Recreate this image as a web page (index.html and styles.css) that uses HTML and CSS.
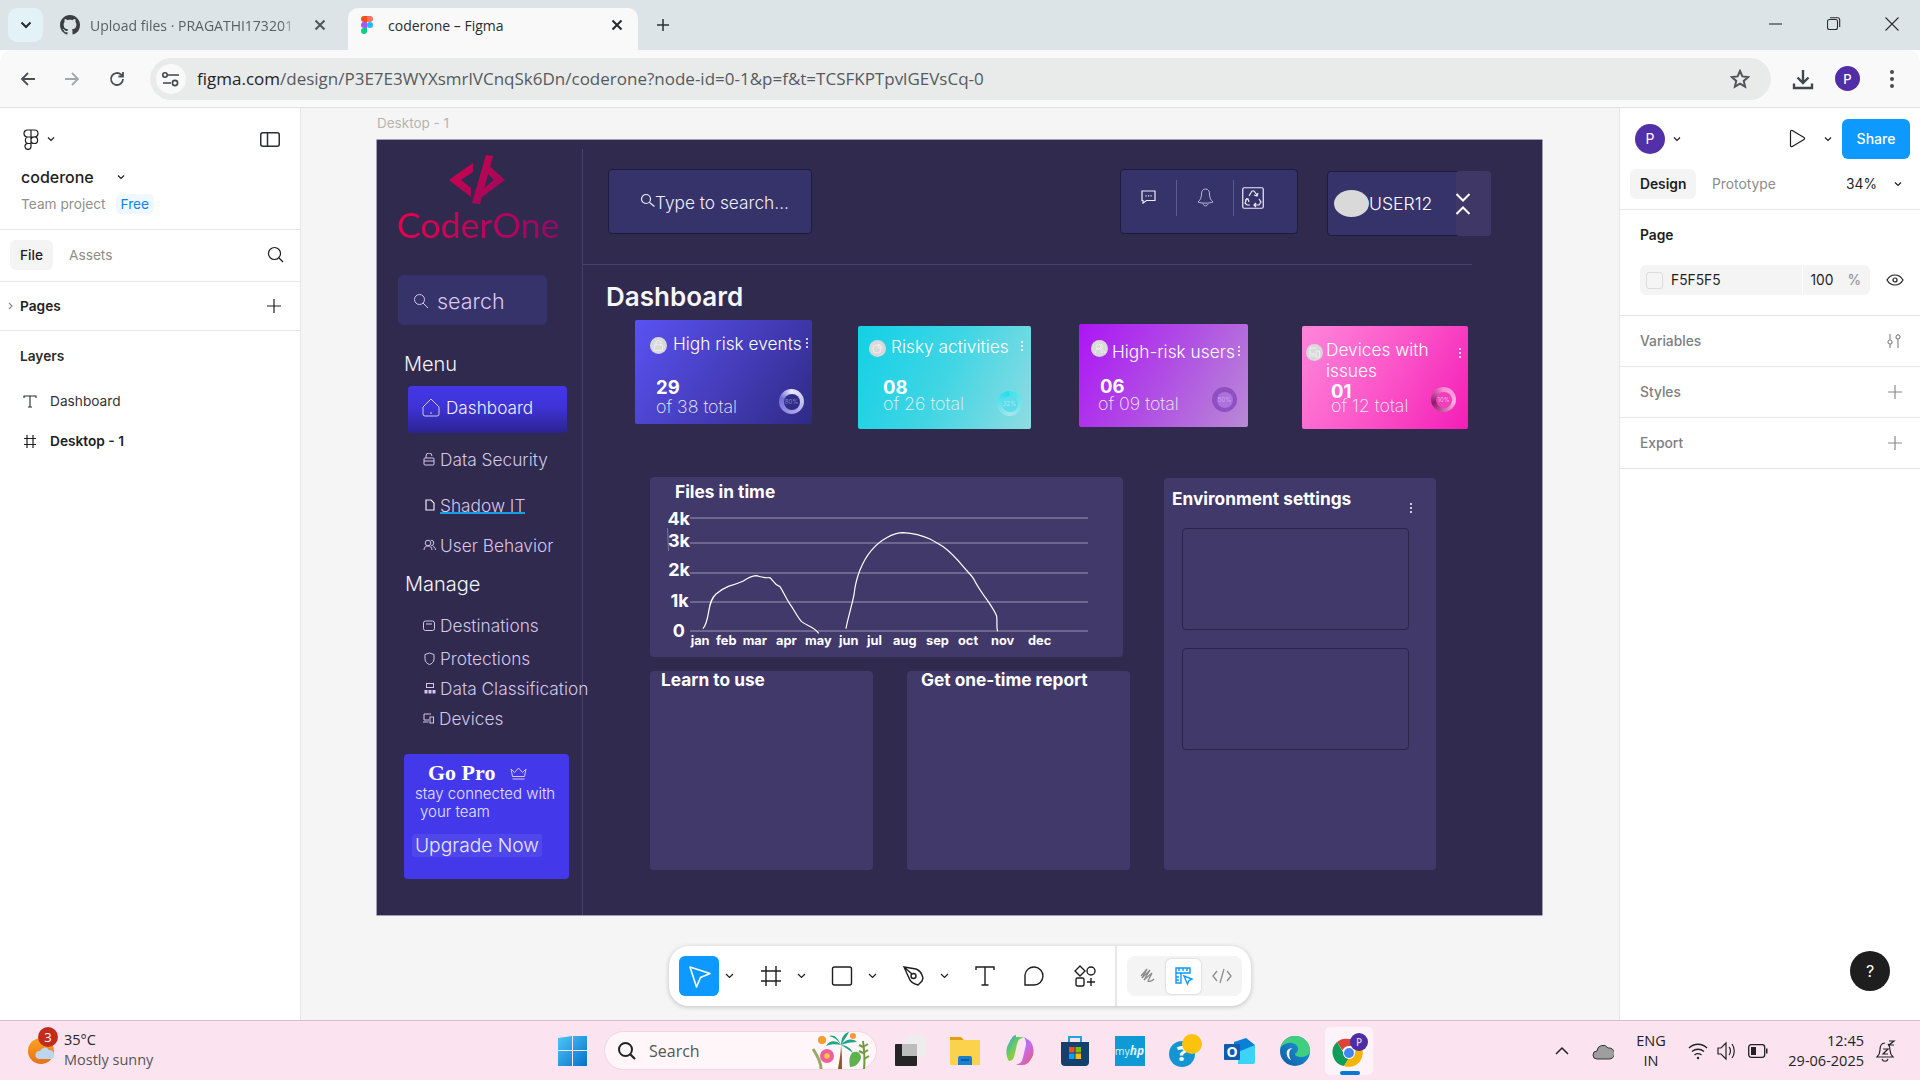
FILE: index.html
```html
<!DOCTYPE html>
<html lang="en">
<head>
<meta charset="utf-8">
<title>coderone – Figma</title>
<link rel="stylesheet" href="styles.css">
</head>
<body>
<header class="tabstrip">
  <button class="tab-search"><svg width="14" height="14" viewBox="0 0 14 14"><path d="M2.5 4.5 7 9l4.5-4.5" class="ic-dark2"/></svg></button>
  <div class="tab tab-idle">
    <svg class="tab-ico" width="20" height="20" viewBox="0 0 16 16"><path fill="#3a3f42" d="M8 0C3.58 0 0 3.58 0 8c0 3.54 2.29 6.53 5.47 7.59.4.07.55-.17.55-.38 0-.19-.01-.82-.01-1.49-2.01.37-2.53-.49-2.69-.94-.09-.23-.48-.94-.82-1.13-.28-.15-.68-.52-.01-.53.63-.01 1.08.58 1.23.82.72 1.21 1.87.87 2.33.66.07-.52.28-.87.51-1.07-1.78-.2-3.64-.89-3.64-3.95 0-.87.31-1.59.82-2.15-.08-.2-.36-1.02.08-2.12 0 0 .67-.21 2.2.82.64-.18 1.32-.27 2-.27s1.36.09 2 .27c1.53-1.04 2.2-.82 2.2-.82.44 1.1.16 1.92.08 2.12.51.56.82 1.27.82 2.15 0 3.07-1.87 3.75-3.65 3.95.29.25.54.73.54 1.48 0 1.07-.01 1.93-.01 2.2 0 .21.15.46.55.38A8.01 8.01 0 0 0 16 8c0-4.42-3.58-8-8-8z"/></svg>
    <span class="tab-title tab-fade">Upload files · PRAGATHI173201</span>
    <svg class="tab-x" width="12" height="12" viewBox="0 0 12 12"><path d="M1.5 1.5l9 9m0-9l-9 9" class="ic-grey2"/></svg>
  </div>
  <div class="tab tab-active">
    <svg class="tab-fig" width="12" height="18" viewBox="0 0 12 18"><path fill="#f24e1e" d="M0 3a3 3 0 0 1 3-3h3v6H3a3 3 0 0 1-3-3z"/><path fill="#ff7262" d="M6 0h3a3 3 0 0 1 0 6H6z"/><path fill="#a259ff" d="M0 9a3 3 0 0 1 3-3h3v6H3a3 3 0 0 1-3-3z"/><circle fill="#1abcfe" cx="9" cy="9" r="3"/><path fill="#0acf83" d="M0 15a3 3 0 0 1 3-3h3v3a3 3 0 0 1-6 0z"/></svg>
    <span class="tab-title tab-title-on">coderone – Figma</span>
    <svg class="tab-x-on" width="12" height="12" viewBox="0 0 12 12"><path d="M1.5 1.5l9 9m0-9l-9 9" class="ic-dark2"/></svg>
  </div>
  <svg class="new-tab" width="14" height="14" viewBox="0 0 14 14"><path d="M7 1v12M1 7h12" class="ic-dark15"/></svg>
  <div class="win-ctrls">
    <svg width="14" height="14" viewBox="0 0 14 14"><path d="M0 7h13" class="ic-dark1"/></svg>
    <svg width="14" height="14" viewBox="0 0 14 14"><rect x=".5" y="2.5" width="10" height="10" rx="2" class="ic-dark1"/><path d="M3 .7h7.5a2 2 0 0 1 2.2 2.2V10" class="ic-dark1"/></svg>
    <svg width="14" height="14" viewBox="0 0 14 14"><path d="M.5.5l13 13m0-13l-13 13" class="ic-dark1"/></svg>
  </div>
</header>

<nav class="browserbar">
  <svg class="nav-back" width="18" height="18" viewBox="0 0 18 18"><path d="M16 9H3M9 3 3 9l6 6" class="ic-grey18"/></svg>
  <svg class="nav-fwd" width="18" height="18" viewBox="0 0 18 18"><path d="M2 9h13M9 3l6 6-6 6" class="ic-light18"/></svg>
  <svg class="nav-reload" width="18" height="18" viewBox="0 0 18 18"><path d="M15 9a6 6 0 1 1-1.8-4.3L15 6.5M15 2v4.5h-4.5" class="ic-grey18"/></svg>
  <div class="omnibox">
    <span class="site-info"><svg width="18" height="18" viewBox="0 0 18 18"><path d="M6 5h11M1 13h8" class="ic-grey15"/><circle cx="3" cy="5" r="2.200" class="ic-grey15"/><circle cx="13" cy="13" r="2.600" class="ic-grey15"/></svg></span>
    <span class="url"><span class="url-host">figma.com</span>/design/P3E7E3WYXsmrlVCnqSk6Dn/coderone?node-id=0-1&amp;p=f&amp;t=TCSFKPTpvlGEVsCq-0</span>
    <svg class="star" width="20" height="20" viewBox="0 0 20 20"><path d="M10 2l2.4 5.4 5.8.6-4.4 3.9 1.3 5.8L10 14.7l-5.1 3 1.3-5.8L1.8 8l5.8-.6z" class="ic-grey2"/></svg>
  </div>
  <svg class="dl" width="22" height="22" viewBox="0 0 22 22"><path d="M11 2v13M5.5 9.5 11 15l5.500-5.500M2 15.500V20h18v-4.500" class="ic-dl"/></svg>
  <span class="chrome-avatar">P</span>
  <svg class="kebab" width="6" height="20" viewBox="0 0 6 20"><circle cx="3" cy="3" r="2" fill="#474c50"/><circle cx="3" cy="10" r="2" fill="#474c50"/><circle cx="3" cy="17" r="2" fill="#474c50"/></svg>
</nav>

<main class="app">
  <aside class="left-panel">
    <section class="lp-head">
      <div class="lp-toprow">
        <svg width="16" height="21" viewBox="0 0 16 21"><path d="M8 1H4.500a3.500 3.500 0 0 0 0 7H8zM8 1h3.500a3.500 3.500 0 0 1 0 7H8zM8 8H4.500a3.500 3.500 0 0 0 0 6.500H8zM8 11.200a3.300 3.300 0 1 0 6.600 0 3.300 3.300 0 1 0-6.600 0zM8 14.500H4.500A3 3 0 1 0 8 17.500z" class="ic-dark12"/></svg>
        <svg class="chev-s" width="8" height="6" viewBox="0 0 8 6"><path d="M1 1.500l3 3 3-3" class="ic-dark12"/></svg>
        <svg class="lp-toggle" width="20" height="15" viewBox="0 0 20 15"><rect x=".75" y=".75" width="18.500" height="13.500" rx="2" class="ic-dark15"/><path d="M7.500 1v13" class="ic-dark15"/></svg>
      </div>
      <div class="lp-name"><span>coderone</span><svg class="chev-name" width="8" height="6" viewBox="0 0 8 6"><path d="M1 1.500l3 3 3-3" class="ic-dark12"/></svg></div>
      <div class="lp-team"><span>Team project</span><span class="free">Free</span></div>
    </section>
    <section class="lp-tabs">
      <span class="pill pill-file">File</span><span class="tab-muted">Assets</span>
      <svg class="lp-search" width="17" height="17" viewBox="0 0 17 17"><circle cx="7.500" cy="7.500" r="6" class="ic-dark12"/><path d="M12 12l4 4" class="ic-dark12"/></svg>
    </section>
    <section class="lp-pages">
      <svg width="5" height="8" viewBox="0 0 5 8"><path d="M1 1l3 3-3 3" class="ic-mute"/></svg>
      <span class="pages-label">Pages</span>
      <svg class="lp-plus" width="14" height="14" viewBox="0 0 14 14"><path d="M7 0v14M0 7h14" class="ic-dark12"/></svg>
    </section>
    <section class="lp-layers">
      <div class="layers-title">Layers</div>
      <div class="layer layer-text"><svg width="14" height="13" viewBox="0 0 14 13"><path d="M1 3V1h12v2M7 1v11M5 12h4" class="ic-dark1"/></svg><span>Dashboard</span></div>
      <div class="layer layer-frame"><svg width="14" height="13" viewBox="0 0 14 13"><path d="M4 0v13M10 0v13M1 3.500h12M1 9.500h12" class="ic-dark12"/></svg><span>Desktop - 1</span></div>
    </section>
  </aside>

  <section class="canvas">
    <div class="frame-label">Desktop - 1</div>
    <div class="frame">
      <div class="side">
        <svg class="logo-mark" width="56" height="50" viewBox="0 0 56 50"><defs><linearGradient id="lg" x1="0" x2="1" y1="0" y2="1"><stop offset="0" stop-color="#d6004f"/><stop offset="1" stop-color="#980a5c"/></linearGradient></defs><path fill="url(#lg)" d="M37 0l7 1-13 48-8-1zM24 8v9l-12 8 10 8v9L0 25zM38 9l18 16-23 17 2-9 10-8-8-8z"/></svg>
        <div class="logo-text">CoderOne</div>
        <div class="side-search"><svg width="16" height="16" viewBox="0 0 16 16"><circle cx="6.500" cy="6.500" r="5" class="ic-lilac"/><path d="M10 10l5 5" class="ic-lilac"/></svg><span>search</span></div>
        <div class="side-h side-menu">Menu</div>
        <div class="nav-on"><svg width="18" height="19" viewBox="0 0 18 19"><path d="M1 9l8-8 8 8v7a2 2 0 0 1-2 2H3a2 2 0 0 1-2-2z" class="ic-lilac"/><path d="M9 14v2" class="ic-lilac"/></svg><span>Dashboard</span></div>
        <div class="nav nav-sec"><svg width="12" height="13" viewBox="0 0 12 13"><rect x="1" y="5" width="10" height="7" rx="1" class="ic-lilac"/><path d="M3 5V3a3 3 0 0 1 6 0M1 8h10" class="ic-lilac"/></svg><span>Data Security</span></div>
        <div class="nav nav-shadow"><svg width="10" height="12" viewBox="0 0 10 12"><path d="M1 1h5l3 3v7H1z" class="ic-white"/></svg><span class="shadow-it">Shadow IT</span></div>
        <div class="nav nav-user"><svg width="13" height="12" viewBox="0 0 13 12"><circle cx="5" cy="4" r="2.800" class="ic-lilac"/><path d="M1 11c0-3 2-4 4-4s4 1 4 4M8 1.200a2.800 2.800 0 0 1 0 5.600M10 7.500c1.500.5 2.500 1.500 2.500 3.500" class="ic-lilac"/></svg><span>User Behavior</span></div>
        <div class="side-h side-manage">Manage</div>
        <div class="nav nav-dest"><svg width="12" height="12" viewBox="0 0 12 12"><rect x=".5" y="2" width="11" height="9.500" rx="2" class="ic-lilac"/><path d="M3 5h6" class="ic-lilac"/></svg><span>Destinations</span></div>
        <div class="nav nav-prot"><svg width="11" height="13" viewBox="0 0 11 13"><path d="M5.500 1l4.500 1.500V7c0 3-2.500 5-4.500 5.500C3.500 12 1 10 1 7V2.500z" class="ic-lilac"/></svg><span>Protections</span></div>
        <div class="nav nav-class"><svg width="12" height="11" viewBox="0 0 12 11"><rect x="2.500" y=".5" width="7" height="4" class="ic-lilac"/><rect x=".5" y="7" width="3" height="3.500" fill="#d6c6ea"/><rect x="4.500" y="7" width="3" height="3.500" fill="#d6c6ea"/><rect x="8.500" y="7" width="3" height="3.500" fill="#d6c6ea"/></svg><span>Data Classification</span></div>
        <div class="nav nav-dev"><svg width="11" height="11" viewBox="0 0 11 11"><path d="M8 1H1v6h5M0 9h5.500" class="ic-lilac"/><rect x="7" y="4" width="3.500" height="6" class="ic-lilac"/></svg><span>Devices</span></div>
        <div class="gopro">
          <div class="gopro-title"><span>Go Pro</span><svg width="17" height="13" viewBox="0 0 17 13"><path d="M1 2l3.500 3.500L8.500 1l4 4.500L16 2l-1.500 7.500h-12zM2.500 12h12" class="ic-lilac"/></svg></div>
          <div class="gopro-l1">stay connected with</div>
          <div class="gopro-l2">your team</div>
          <div class="upgrade">Upgrade Now</div>
        </div>
      </div>

      <div class="board">
        <div class="top">
          <div class="top-search"><svg width="15" height="15" viewBox="0 0 15 15"><circle cx="6" cy="6" r="4.500" class="ic-white"/><path d="M9.500 9.500l5 4" class="ic-white"/></svg><span>Type to search...</span></div>
          <div class="top-icons">
            <span class="ti ti-chat"><svg width="15" height="14" viewBox="0 0 15 14"><path d="M1 1h13v9.500H5.500L2 13v-2.500H1z" class="ic-white"/><path d="M4.500 5.800h1.200M7 5.800h1.200M9.500 5.800h1.200" class="ic-white"/></svg></span>
            <span class="ti ti-bell"><svg width="17" height="19" viewBox="0 0 17 19"><path d="M8.500 1C5.500 1 4.500 3.500 4.500 6c0 3-1 6-3.500 8 3 1.500 11 1.500 15 0-2.500-2-3.500-5-3.500-8 0-2.500-1-5-4-5zM6 16c1 2.500 4 2.500 5 0" class="ic-bell"/></svg></span>
            <span class="ti ti-rec"><svg width="22" height="22" viewBox="0 0 22 22"><rect x=".75" y=".75" width="20.500" height="20.500" rx="1.500" class="ic-white"/><path d="M7 9l3-5h2l3 4M16 6l-1 3-3-1M5 11l-2 5 2 2h3M3 13l3-1 1 3M12 18h5l2-3-2-3M14 16l-2 2 2 2" class="ic-white"/></svg></span>
          </div>
          <div class="top-user">
            <span class="user-dot"></span><span class="user-name">USER12</span>
          </div>
          <div class="user-chev"><svg width="16" height="22" viewBox="0 0 16 22"><path d="M1.500 1l6.500 6.500L14.500 1M1.500 21 8 14.500 14.500 21" class="ic-chev"/></svg></div>
        </div>
        <div class="rule"></div>
        <h1 class="dash-title">Dashboard</h1>
        <div class="cards">
          <article class="card card-1">
            <div class="card-head"><span class="card-ico"><svg width="11" height="11" viewBox="0 0 11 11"><path d="M1.500 5h8v5.500h-8zM3 5V3a2.500 2.500 0 0 1 5 0v2" class="ic-chip"/></svg></span><span class="card-title">High risk events</span><span class="card-dots"><i></i><i></i><i></i></span></div>
            <div class="card-num">29</div><div class="card-total">of 38 total</div>
            <div class="donut"><span>80%</span></div>
          </article>
          <article class="card card-2">
            <div class="card-head"><span class="card-ico"><svg width="11" height="11" viewBox="0 0 11 11"><circle cx="5" cy="6" r="4" class="ic-chip"/><path d="M6 1a4 4 0 0 1 4 4H6z" class="ic-chip"/></svg></span><span class="card-title">Risky activities</span><span class="card-dots"><i></i><i></i><i></i></span></div>
            <div class="card-num">08</div><div class="card-total">of 26 total</div>
            <div class="donut"><span>32%</span></div>
          </article>
          <article class="card card-3">
            <div class="card-head"><span class="card-ico"><svg width="11" height="11" viewBox="0 0 11 11"><circle cx="4.500" cy="3.500" r="2.500" class="ic-chip"/><path d="M1 10c0-3 1.500-4 3.500-4S8 7 8 10M7 1.200a2.500 2.500 0 0 1 0 4.600M9 6.500c1 .8 1.500 2 1.500 3.500" class="ic-chip"/></svg></span><span class="card-title">High-risk users</span><span class="card-dots"><i></i><i></i><i></i></span></div>
            <div class="card-num">06</div><div class="card-total">of 09 total</div>
            <div class="donut"><span>50%</span></div>
          </article>
          <article class="card card-4">
            <div class="card-head"><span class="card-ico"><svg width="11" height="11" viewBox="0 0 11 11"><path d="M8 1H1v6h5M0 9h5.500" class="ic-chip"/><rect x="7" y="4" width="3.500" height="6" class="ic-chip"/></svg></span><span class="card-title">Devices with<br>issues</span><span class="card-dots"><i></i><i></i><i></i></span></div>
            <div class="card-num">01</div><div class="card-total">of 12 total</div>
            <div class="donut"><span>10%</span></div>
          </article>
        </div>
        <div class="panels">
          <div class="panels-left">
            <section class="panel panel-chart">
              <h2 class="panel-title chart-title">Files in time</h2>
              <svg class="chart" width="473" height="180" viewBox="0 0 473 180">
                <g class="grid-lines"><path d="M40 41h398M40 66h398M40 96h398M40 125h398M40 154h398"/></g>
                <path class="stray" d="M17.500 51l1 23"/>
                <g class="axis-y"><text x="40" y="47.800">4k</text><text x="40" y="70.200">3k</text><text x="40" y="98.800">2k</text><text x="38.700" y="129.500">1k</text><text x="35" y="159.500">0</text></g>
                <g class="axis-x"><text x="40.700" y="168">jan</text><text x="66" y="168">feb</text><text x="92.700" y="168">mar</text><text x="126" y="168">apr</text><text x="155" y="168">may</text><text x="189" y="168">jun</text><text x="217" y="168">jul</text><text x="243" y="168">aug</text><text x="276" y="168">sep</text><text x="308" y="168">oct</text><text x="341" y="168">nov</text><text x="378" y="168">dec</text></g>
                <g class="curves" transform="translate(-20 -7) scale(.3333)">
                  <path d="M219 476C226 468 232 450 236 425C240 400 244 385 258 372C270 362 280 355 295 349C310 345 325 340 340 333C352 325 365 318 378 317C390 319 400 325 420 323C428 328 430 342 450 350C460 365 470 390 485 410C495 425 505 445 515 455C530 468 550 468 566 490"/>
                  <path d="M648 476C652 450 665 410 672 375C675 345 680 325 690 300C705 262 730 225 770 203C790 192 805 188 820 188C850 190 880 198 900 207C915 215 925 222 940 230C960 245 980 265 1000 290C1010 303 1020 310 1030 325C1040 345 1060 375 1075 395C1085 410 1095 425 1100 438C1103 460 1098 470 1103 484"/>
                </g>
              </svg>
            </section>
            <div class="panels-row">
              <section class="panel panel-learn"><h2 class="panel-title">Learn to use</h2></section>
              <section class="panel panel-report"><h2 class="panel-title">Get one-time report</h2></section>
            </div>
          </div>
          <section class="panel panel-env">
            <h2 class="panel-title">Environment settings</h2>
            <span class="env-dots"><i></i><i></i><i></i></span>
            <div class="env-box env-box-1"></div>
            <div class="env-box env-box-2"></div>
          </section>
        </div>
      </div>
    </div>

    <div class="toolbar">
      <span class="tool tool-on"><svg width="40" height="40" viewBox="0 0 40 40"><path d="M11 11l20 6.500-9.500 4L17.500 31z" class="ic-tool-w"/></svg></span>
      <svg class="chev-t" width="9" height="6" viewBox="0 0 9 6"><path d="M1 1l3.500 3.500L8 1" class="ic-dark12"/></svg>
      <span class="tool"><svg width="24" height="24" viewBox="0 0 24 24"><path d="M7 2v20M17 2v20M2 7h20M2 17h20" class="ic-tool"/></svg></span>
      <svg class="chev-t" width="9" height="6" viewBox="0 0 9 6"><path d="M1 1l3.500 3.500L8 1" class="ic-dark12"/></svg>
      <span class="tool"><svg width="24" height="24" viewBox="0 0 24 24"><rect x="2.500" y="3" width="19" height="18" rx="2" class="ic-tool"/></svg></span>
      <svg class="chev-t" width="9" height="6" viewBox="0 0 9 6"><path d="M1 1l3.500 3.500L8 1" class="ic-dark12"/></svg>
      <span class="tool"><svg width="24" height="24" viewBox="0 0 24 24"><path d="M2 3l12 2c3 1 6 5 7 9l-1 3-4 4c-4-1-8-4-9-7zM2 3l8 7" class="ic-tool"/><circle cx="11.500" cy="12" r="2.500" class="ic-tool"/></svg></span>
      <svg class="chev-t" width="9" height="6" viewBox="0 0 9 6"><path d="M1 1l3.500 3.500L8 1" class="ic-dark12"/></svg>
      <span class="tool tool-t"><svg width="24" height="24" viewBox="0 0 24 24"><path d="M3 6V3h18v3M12 3v18M8.500 21h7" class="ic-tool"/></svg></span>
      <span class="tool tool-c"><svg width="24" height="24" viewBox="0 0 24 24"><path d="M3 21V11a9 9 0 1 1 9 10z" class="ic-tool"/></svg></span>
      <span class="tool tool-a"><svg width="24" height="24" viewBox="0 0 24 24"><path d="M7 2l5 5-5 5-5-5z" class="ic-tool"/><circle cx="18" cy="7" r="4" class="ic-tool"/><rect x="3" y="14" width="8" height="8" rx="1.500" class="ic-tool"/><path d="M18 14v8M14 18h8" class="ic-tool"/></svg></span>
      <span class="tb-sep"></span>
      <div class="modes">
        <span class="mode"><svg width="20" height="20" viewBox="0 0 20 20"><path d="M3 10l6-7-5 9 8-8-6 10 8-7-4 8c1 1 4 0 6-2" class="ic-mute2"/></svg></span>
        <span class="mode mode-on"><svg width="22" height="22" viewBox="0 0 22 22"><path d="M3 3h14v5H8v10H3zM3 8h5M6 3v3M10 3v3M14 3v3M3 12h3M3 15h3" class="ic-blue"/><path d="M11 11l8 3-3 1.500-1.500 3.500z" class="ic-blue"/></svg></span>
        <span class="mode"><svg width="20" height="16" viewBox="0 0 20 16"><path d="M5 3 1 8l4 5M15 3l4 5-4 5M12 1 8 15" class="ic-mute2"/></svg></span>
      </div>
    </div>
    <span class="help">?</span>
  </section>

  <aside class="right-panel">
    <section class="rp-top">
      <span class="rp-avatar">P</span>
      <svg class="chev-s" width="8" height="6" viewBox="0 0 8 6"><path d="M1 1.500l3 3 3-3" class="ic-dark12"/></svg>
      <svg class="rp-play" width="17" height="19" viewBox="0 0 17 19"><path d="M1.500 2.500c0-1 1-1.500 1.800-1L15 8.500c.8.500.8 1.500 0 2L3.300 17.500c-.8.500-1.800 0-1.800-1z" class="ic-dark12"/></svg>
      <svg class="rp-pchev" width="8" height="6" viewBox="0 0 8 6"><path d="M1 1.500l3 3 3-3" class="ic-dark12"/></svg>
      <span class="share">Share</span>
    </section>
    <section class="rp-tabs">
      <span class="pill pill-design">Design</span><span class="tab-muted">Prototype</span>
      <span class="zoom">34%</span>
      <svg class="zoom-chev" width="8" height="6" viewBox="0 0 8 6"><path d="M1 1.500l3 3 3-3" class="ic-dark12"/></svg>
    </section>
    <section class="rp-page">
      <div class="rp-page-title">Page</div>
      <div class="rp-color-row">
        <div class="color-field"><span class="swatch"></span><span class="hex">F5F5F5</span><span class="opac">100</span><span class="pct">%</span></div>
        <svg class="eye" width="18" height="12" viewBox="0 0 18 12"><path d="M1 6c2-3.500 5-5 8-5s6 1.500 8 5c-2 3.500-5 5-8 5S3 9.500 1 6z" class="ic-dark12"/><circle cx="9" cy="6" r="2" class="ic-dark12"/></svg>
      </div>
    </section>
    <section class="rp-row"><span>Variables</span><svg width="16" height="16" viewBox="0 0 16 16"><path d="M4 1v6M4 11v4M12 1v1M12 6v9" class="ic-mute"/><circle cx="4" cy="9" r="2" class="ic-mute"/><circle cx="12" cy="4" r="2" class="ic-mute"/></svg></section>
    <section class="rp-row"><span>Styles</span><svg width="14" height="14" viewBox="0 0 14 14"><path d="M7 0v14M0 7h14" class="ic-mute"/></svg></section>
    <section class="rp-row"><span>Export</span><svg width="14" height="14" viewBox="0 0 14 14"><path d="M7 0v14M0 7h14" class="ic-mute"/></svg></section>
  </aside>
</main>

<footer class="taskbar">
  <div class="weather">
    <span class="wx-icon"><svg width="30" height="34" viewBox="0 0 30 34"><defs><linearGradient id="sun" x1="0" x2="0" y1="0" y2="1"><stop offset="0" stop-color="#f9a51e"/><stop offset="1" stop-color="#e8701a"/></linearGradient></defs><circle cx="14" cy="17" r="13" fill="url(#sun)"/><path fill="#bcd6ee" d="M12 25a4 4 0 0 1 1-8 5 5 0 0 1 9-1 4.500 4.500 0 0 1 5 4.500 4 4 0 0 1-2 4.500z"/></svg><b class="wx-badge">3</b></span>
    <div class="wx-text"><div class="wx-temp">35°C</div><div class="wx-desc">Mostly sunny</div></div>
  </div>
  <svg class="win" width="29" height="30" viewBox="0 0 29 30"><defs><linearGradient id="w" x1="0" x2="1" y1="0" y2="1"><stop offset="0" stop-color="#4cc7f6"/><stop offset="1" stop-color="#0670cc"/></linearGradient></defs><path fill="url(#w)" d="M0 2l14-2v14H0zM15 0h14v14H15zM0 15h14v15H0zM15 15h14v15H15z"/></svg>
  <div class="ts">
    <svg width="20" height="20" viewBox="0 0 20 20"><circle cx="8.500" cy="8.500" r="6.500" fill="none" stroke="#222" stroke-width="2"/><path d="M13 13l5 5" stroke="#222" stroke-width="2.200" fill="none"/></svg>
    <span>Search</span>
    <svg class="flora" width="60" height="40" viewBox="0 0 60 40"><path d="M3 18c4 6 8 14 8 20" stroke="#9aa964" stroke-width="3" fill="none"/><path d="M31 14c0 8-2 18-3 24h4c0-8 0-18-1-24z" fill="#8a5a24"/><path d="M31 14c-6-6-12-4-15 1 5-2 10-2 15-1zM31 14c-3-8-8-11-12-9 5 1 9 4 12 9zM31 14c0-7 3-12 8-13-2 4-5 8-8 13zM31 14c5-6 11-7 16-3-5 0-11 1-16 3zM31 14c5 0 10 3 12 8-4-3-8-6-12-8z" fill="#21a386"/><circle cx="17" cy="25" r="7" fill="#ef5f9b"/><circle cx="17" cy="25" r="2.800" fill="#f7c547"/><path d="M42 22c5-3 9 0 9 5-2 6-6 9-11 9-1-6-1-10 2-14z" fill="#5cb24d"/><path d="M53 10c1 8 2 20 1 28" stroke="#6f9d3e" stroke-width="2" fill="none"/><path d="M53 16l5-3M53 22l5-3M54 28l5-3M53 16l-4-2M53 22l-4-2" stroke="#6f9d3e" stroke-width="2"/><circle cx="12" cy="9" r="4" fill="#f79b30"/><circle cx="43" cy="5" r="3" fill="#f79b30"/></svg>
  </div>
  <div class="tb-apps">
    <span class="app-tile"><svg width="34" height="34" viewBox="0 0 34 34"><rect x="13" y="2" width="20" height="20" rx="2" fill="#ededed"/><rect x="2" y="10" width="22" height="22" rx="1" fill="#252525"/><rect x="9" y="10" width="15" height="12" fill="#bdbdbd"/></svg></span>
    <span class="app-tile"><svg width="32" height="30" viewBox="0 0 32 30"><path d="M1 1h11l3 3h-14z" fill="#e2a00e"/><path d="M1 4h30v25H1z" fill="#fbd24c"/><path d="M9 29v-7a2 2 0 0 1 2-2h10a2 2 0 0 1 2 2v7z" fill="#1a7fd0"/><path d="M12 24h8" stroke="#0b4f8c" stroke-width="1.500"/></svg></span>
    <span class="app-tile"><svg width="32" height="32" viewBox="0 0 32 32"><defs><linearGradient id="c1" x1="0" x2="1" y1="0" y2="1"><stop offset="0" stop-color="#1ba6e8"/><stop offset=".5" stop-color="#7ad04a"/><stop offset="1" stop-color="#f1a31c"/></linearGradient><linearGradient id="c2" x1="0" x2="1" y1="0" y2="1"><stop offset="0" stop-color="#7b6cf0"/><stop offset=".5" stop-color="#c46cf0"/><stop offset="1" stop-color="#ee5a5c"/></linearGradient></defs><path fill="url(#c2)" d="M20 2l6 4c4 4 5 14 1 18-2 4-5 6-9 6h-6l4-2c2-1 3-5 4-10l2-8c.500-2-.500-6-2-8z"/><path fill="url(#c1)" d="M12 2h8L16 4c-2 1-3 5-4 10l-2 8c-1 3-3 4-5 4-3-4-4-12 0-18 2-4 4-8 7-8z"/></svg></span>
    <span class="app-tile"><svg width="30" height="32" viewBox="0 0 30 32"><path fill="#12406f" d="M1 7h28v20a4 4 0 0 1-4 4H5a4 4 0 0 1-4-4z"/><path d="M9 7V2h12v5" stroke="#20a5e4" stroke-width="2" fill="none"/><rect x="9" y="12" width="5.500" height="5.500" fill="#f25022"/><rect x="15.500" y="12" width="5.500" height="5.500" fill="#7fba00"/><rect x="9" y="18.500" width="5.500" height="5.500" fill="#00a4ef"/><rect x="15.500" y="18.500" width="5.500" height="5.500" fill="#ffb900"/></svg></span>
    <span class="app-tile"><span class="myhp">my<i>hp</i></span></span>
    <span class="app-tile"><svg width="34" height="34" viewBox="0 0 34 34"><circle cx="14" cy="20" r="13" fill="#1295d2"/><text x="14" y="27" class="help-q">?</text><circle cx="24" cy="10" r="10" fill="#fcc20d"/></svg></span>
    <span class="app-tile"><svg width="32" height="26" viewBox="0 0 32 26"><path fill="#0a7fd6" d="M10 4l12-4 9 7v14H10z"/><path fill="#3dd2f8" d="M14 14l17-7v17a2 2 0 0 1-2 2H14z"/><rect x="0" y="6" width="16" height="16" rx="1" fill="#0f5cae"/><text x="8" y="19" class="outlook-o">O</text></svg></span>
    <span class="app-tile"><svg width="32" height="32" viewBox="0 0 32 32"><defs><linearGradient id="e1" x1="0" x2="1" y1="1" y2="0"><stop offset="0" stop-color="#0c59a4"/><stop offset="1" stop-color="#1fa5e2"/></linearGradient></defs><circle cx="16" cy="16" r="15" fill="url(#e1)"/><path fill="#3fcf7f" d="M1 14C3 5 10 1 16 1c9 0 15 7 15 14 0 5-5 7-9 7-3 0-6-1-6-3 0-1 3-1 3-5 0-5-6-7-10-6-4 1-7 3-8 6z"/><path fill="#fdf0f7" d="M14 13c-4 1-5 7-2 12-3-1-5-5-4-9 1-2 3-3 6-3z"/></svg></span>
    <span class="app-tile app-tile-chrome"><svg width="36" height="36" viewBox="0 0 36 36"><path fill="#db4437" d="M17 6a14 14 0 0 1 12 7H17a7 7 0 0 0-6.500 4.500L5 9A14 14 0 0 1 17 6z"/><path fill="#0f9d58" d="M5 9l6 10a7 7 0 0 0 7 4.500L12 33A14 14 0 0 1 5 9z"/><path fill="#f4b400" d="M29 13a14 14 0 0 1-17 20l6-10a7 7 0 0 0 5-10z"/><circle cx="17" cy="20" r="6" fill="#fff"/><circle cx="17" cy="20" r="5" fill="#4285f4"/><circle cx="27" cy="9" r="9" fill="#4c2da3"/><text x="27" y="13" class="chrome-p">P</text></svg><i class="run-bar"></i></span>
  </div>
  <div class="tray">
    <svg class="tr-caret" width="16" height="10" viewBox="0 0 16 10"><path d="M2 8l6-6 6 6" stroke="#222" stroke-width="1.500" fill="none"/></svg>
    <svg class="tr-cloud" width="22" height="20" viewBox="0 0 22 20"><path d="M5 18a4 4 0 0 1 0-8 6 6 0 0 1 11-3 5 5 0 0 1 2 11z" fill="#9e9e9e" stroke="#333" stroke-width="1"/></svg>
    <div class="tr-lang"><div>ENG</div><div>IN</div></div>
    <svg class="tr-wifi" width="20" height="20" viewBox="0 0 20 20"><path d="M1 7c5-5 13-5 18 0M4 10.500c3.500-3 8.500-3 12 0M6.500 14c2-1.500 5-1.500 7 0" stroke="#222" stroke-width="1.300" fill="none"/><circle cx="10" cy="17" r="1.200" fill="#222"/></svg>
    <svg class="tr-vol" width="20" height="22" viewBox="0 0 20 22"><path d="M1 8h3l5-5v16l-5-5H1z" fill="none" stroke="#222" stroke-width="1.200"/><path d="M12 7c2 2 2 6 0 8M15 4c3 4 3 10 0 14" fill="none" stroke="#222" stroke-width="1.200"/></svg>
    <svg class="tr-bat" width="20" height="14" viewBox="0 0 20 14"><rect x=".7" y=".7" width="16" height="12.600" rx="2.500" fill="none" stroke="#222" stroke-width="1.300"/><rect x="3" y="3" width="5" height="8" fill="#222"/><rect x="18" y="4.500" width="1.500" height="5" fill="#222"/></svg>
    <div class="tr-clock"><div>12:45</div><div>29-06-2025</div></div>
    <svg class="tr-bell" width="20" height="24" viewBox="0 0 20 24"><path d="M9 4C5 4 4 8 4 11c0 3-1 5-3 7h16c-2-2-3-4-3-7 0-2 0-4-2-6M6 20c1 3 5 3 6 0M7 10h5l-5 5h5M13 2h5l-5 4h5" fill="none" stroke="#222" stroke-width="1.200"/></svg>
  </div>
</footer>
</body>
</html>
```

FILE: styles.css
```css
* { box-sizing: border-box; }
html, body { margin: 0; padding: 0; }
body { width: 1920px; height: 1080px; overflow: hidden; display: flex; flex-direction: column; font-family: Inter, "Noto Sans", sans-serif; background: #fff; color: #1e1e1e; }
h1, h2 { margin: 0; }
svg { display: block; flex: none; }
button { border: 0; padding: 0; }

/* shared stroke classes */
.ic-dark2, .ic-grey2, .ic-dark15, .ic-dark1, .ic-dark12, .ic-grey18, .ic-light18, .ic-grey15, .ic-dl, .ic-mute, .ic-mute2, .ic-lilac, .ic-white, .ic-bell, .ic-chev, .ic-chip, .ic-tool, .ic-tool-w, .ic-blue { fill: none; }
.ic-dark2 { stroke: #23292d; stroke-width: 2; }
.ic-grey2 { stroke: #4f5558; stroke-width: 2; }
.ic-dark15 { stroke: #2a2f33; stroke-width: 1.5; }
.ic-dark1 { stroke: #2a2d30; stroke-width: 1.1; }
.ic-dark12 { stroke: #1e1e1e; stroke-width: 1.2; }
.ic-grey18 { stroke: #4a4f52; stroke-width: 1.8; }
.ic-light18 { stroke: #a3a6a8; stroke-width: 1.8; }
.ic-grey15 { stroke: #3f4548; stroke-width: 1.6; }
.ic-dl { stroke: #3f484c; stroke-width: 2.4; }
.ic-mute { stroke: #8a8a8a; stroke-width: 1.2; }
.ic-mute2 { stroke: #8d8d8d; stroke-width: 1.3; }
.ic-lilac { stroke: #d6c6ea; stroke-width: 1; }
.ic-white { stroke: #f0ecfa; stroke-width: 1.2; }
.ic-bell { stroke: #bfb9dc; stroke-width: 1; }
.ic-chev { stroke: #fff; stroke-width: 2; }
.ic-chip { stroke: #f4f4f4; stroke-width: .8; }
.ic-tool { stroke: #1e1e1e; stroke-width: 1.4; }
.ic-tool-w { stroke: #fff; stroke-width: 1.6; stroke-linejoin: round; }
.ic-blue { stroke: #0d99ff; stroke-width: 1.4; }

/* Browser chrome */
.tabstrip { height: 50px; flex: none; background: #dde4e7; display: flex; position: relative; align-items: flex-start; }
.tab-search { width: 35px; height: 34px; margin: 8px 0 0 8px; border-radius: 9px; background: #e2f2f7; display: flex; align-items: center; justify-content: center; }
.tab { height: 42px; margin-top: 8px; padding-bottom: 8px; display: flex; align-items: center; }
.tab-idle { width: 305px; padding-left: 17px; }
.tab-ico { margin-right: 10px; }
.tab-title { font-family: "Open Sans", sans-serif; font-size: 14px; white-space: nowrap; overflow: hidden; }
.tab-fade { width: 208px; color: #5a5f62; -webkit-mask-image: linear-gradient(90deg, #000 92%, transparent); mask-image: linear-gradient(90deg, #000 92%, transparent); }
.tab-x { margin-left: 16px; }
.tab-active { width: 290px; background: #f9f9f9; border-radius: 10px 10px 0 0; padding-left: 13px; }
.tab-fig { margin-right: 15px; }
.tab-title-on { color: #2a2d30; width: 223px; }
.new-tab { margin: 18px 0 0 18px; }
.win-ctrls { margin-left: auto; margin-top: 17px; display: flex; gap: 44px; padding-right: 21px; }

.browserbar { height: 58px; flex: none; background: #f9f9f9; border-bottom: 1px solid #e2e2e2; display: flex; align-items: center; border-radius: 12px 12px 0 0; }
.nav-back { margin-left: 19px; }
.nav-fwd { margin-left: 26px; }
.nav-reload { margin-left: 27px; }
.omnibox { width: 1621px; height: 42px; margin-left: 24px; border-radius: 21px; background: #e9ebea; display: flex; align-items: center; }
.site-info { width: 30px; height: 30px; margin-left: 6px; border-radius: 50%; background: #f9f9f9; display: flex; align-items: center; justify-content: center; }
.url { margin-left: 11px; font-family: "Open Sans", sans-serif; font-size: 17px; color: #555a5e; white-space: nowrap; }
.url-host { color: #1f2326; }
.star { margin-left: auto; margin-right: 21px; }
.dl { margin-left: 21px; }
.chrome-avatar { width: 25px; height: 25px; margin-left: 21px; border-radius: 50%; background: #512da8; color: #fff; font-size: 13px; font-weight: 500; display: flex; align-items: center; justify-content: center; }
.kebab { margin-left: 29px; }

.app { flex: 1; display: flex; min-height: 0; }

/* Figma left panel */
.left-panel { width: 301px; flex: none; background: #fff; border-right: 1px solid #e6e6e6; font-size: 13.7px; }
.lp-head { height: 122px; border-bottom: 1px solid #e6e6e6; padding: 21px 20px 0 21px; }
.lp-toprow { display: flex; align-items: center; height: 20px; padding-left: 2px; }
.chev-s { margin-left: 8px; }
.lp-toggle { margin-left: auto; }
.lp-name { display: flex; align-items: center; margin-top: 18px; height: 20px; font-size: 16px; font-weight: 500; color: #1e1e1e; }
.chev-name { margin-left: 23px; }
.lp-team { display: flex; align-items: center; margin-top: 7px; height: 20px; color: #8f8f8f; }
.free { margin-left: 10px; padding: 0 5px; line-height: 20px; border-radius: 5px; background: #f0f8ff; color: #0d85ea; }
.lp-tabs { height: 52px; border-bottom: 1px solid #e6e6e6; display: flex; align-items: center; padding: 0 16px 2px 10px; }
.pill { height: 30px; line-height: 30px; border-radius: 6px; background: #f4f4f4; font-weight: 500; color: #1e1e1e; }
.pill-file { width: 43px; padding-left: 10px; }
.tab-muted { margin-left: 16px; color: #8c8c8c; }
.lp-search { margin-left: auto; }
.lp-pages { height: 49px; border-bottom: 1px solid #e6e6e6; display: flex; align-items: center; padding: 0 19px 0 8px; }
.pages-label { margin-left: 7px; font-weight: 600; }
.lp-plus { margin-left: auto; }
.lp-layers { padding: 16px 0 0 20px; }
.layers-title { font-weight: 600; line-height: 18px; color: #2c2c2c; }
.layer { display: flex; align-items: center; height: 20px; padding-left: 3px; }
.layer span { margin-left: 13px; }
.layer-text { margin-top: 26px; color: #333; }
.layer-frame { margin-top: 20px; font-weight: 600; }

/* Canvas */
.canvas { flex: 1; min-width: 0; background: #f5f5f5; position: relative; padding-left: 76px; }
.frame-label { height: 32px; padding-top: 7px; font-size: 13.5px; line-height: 16px; color: #b4b4b4; }
.frame { width: 1165px; height: 775px; background: #2f2a4e; display: flex; box-shadow: 0 0 0 .6px #6c6980; color: #fff; }

/* Design sidebar */
.side { width: 206px; height: 766px; margin-top: 9px; flex: none; border-right: 1px solid #463f73; padding-top: 6px; }
.logo-mark { margin-left: 72px; }
.logo-text { margin: 2px 0 0 20px; font-family: Lato, sans-serif; font-weight: 400; font-size: 35.7px; line-height: 36px; background: linear-gradient(90deg, #e8004e, #8b0a68); -webkit-background-clip: text; background-clip: text; color: transparent; }
.side-search { width: 149px; height: 50px; margin: 32px 0 0 21px; border-radius: 5px; background: #36326a; display: flex; align-items: center; padding: 2px 0 0 15px; gap: 8px; font-size: 21.5px; font-weight: 300; color: #d8c8ee; }
.side-h { font-size: 20px; font-weight: 300; line-height: 24px; color: #f4f2f8; }
.side-menu { margin: 27px 0 0 27px; }
.side-manage { margin: 16px 0 0 28px; }
.nav-on { width: 159px; height: 47px; margin: 10px 0 0 31px; border-radius: 4px; background: linear-gradient(180deg, #4437e6 0%, #3e33d6 45%, #2b2391 100%); display: flex; align-items: flex-start; padding: 12px 0 0 14px; gap: 6px; font-size: 17.2px; font-weight: 300; line-height: 20px; color: #f2eefc; }
.nav { display: flex; align-items: center; height: 22px; margin-left: 46px; font-size: 17.3px; font-weight: 300; color: #d6c6ea; white-space: nowrap; }
.nav svg { margin-right: 5px; }
.nav-sec { margin-top: 15px; }
.nav-shadow { margin-top: 24px; padding-left: 2px; }
.nav-shadow svg { margin-right: 5px; }
.shadow-it { border-bottom: 2px solid #149fe4; line-height: 18px; height: 17px; }
.nav-user { margin-top: 18px; }
.nav-user svg { margin-right: 4px; }
.nav-dest { margin-top: 18px; }
.nav-prot { margin-top: 11px; margin-left: 47px; }
.nav-prot svg { margin-right: 5px; }
.nav-class { margin-top: 8px; margin-left: 47px; }
.nav-class svg { margin-right: 4px; }
.nav-dev { margin-top: 8px; }
.nav-dev svg { margin-right: 5px; }
.gopro { width: 165px; height: 125px; margin: 25px 0 0 27px; border-radius: 4px; background: #4339ea; padding-top: 8px; }
.gopro-title { display: flex; align-items: center; margin-left: 24px; height: 22px; font-family: "Liberation Serif", serif; font-size: 22px; font-weight: 700; }
.gopro-title svg { margin-left: 15px; }
.gopro-l1 { margin: 0 0 0 11px; font-size: 15px; font-weight: 300; line-height: 19px; color: #e6e2ff; white-space: nowrap; }
.gopro-l2 { margin-left: 16px; font-size: 15px; font-weight: 300; line-height: 17px; color: #e6e2ff; }
.upgrade { width: 130px; height: 23px; margin: 14px 0 0 8px; border-radius: 3px; background: #4f47ec; padding-left: 3px; font-size: 19.2px; font-weight: 300; line-height: 23px; color: #e9e6ff; white-space: nowrap; }

/* Design main */
.board { flex: 1; min-width: 0; }
.top { display: flex; align-items: flex-start; padding: 29px 0 0 25px; height: 96px; }
.top-search { width: 204px; height: 65px; border: 1px solid #1f1b3c; border-radius: 4px; background: #36336a; display: flex; align-items: center; padding: 2px 0 0 31px; font-size: 17.3px; font-weight: 300; color: #f1eefb; white-space: nowrap; }
.top-search svg { margin-bottom: 4px; }
.top-icons { width: 178px; height: 65px; margin-left: 308px; border: 1px solid #1f1b3c; border-radius: 4px; background: #36336a; display: flex; align-items: flex-start; padding-top: 10px; }
.ti { display: flex; align-items: center; justify-content: center; height: 36px; }
.ti-chat { width: 56px; border-right: 1px solid #5f5a8c; padding-bottom: 2px; }
.ti-bell { width: 57px; border-right: 1px solid #5f5a8c; padding-bottom: 2px; }
.ti-rec { margin-left: 8px; align-items: flex-start; padding-top: 7px; }
.top-user { width: 133px; height: 65px; margin: 2px 0 0 29px; border: 1px solid #1f1b3c; border-radius: 4px; background: #36336a; display: flex; align-items: center; padding-left: 6px; font-size: 17.6px; font-weight: 300; }
.user-dot { width: 35px; height: 27px; margin-left: 0; border-radius: 50%; background: #d9d9d9; }
.user-name { margin-left: 0; padding-bottom: 1px; }
.user-chev { width: 35px; height: 65px; margin: 2px 0 0 -4px; border-radius: 4px; background: #3f3866; display: flex; align-items: center; padding-left: 0; }
.user-chev svg { margin-left: -1px; }
.rule { width: 889px; height: 1px; margin-top: 28px; background: #463f73; }
.dash-title { margin: 16px 0 0 23px; font-size: 26px; font-weight: 600; line-height: 32px; color: #f6f6f6; }
.cards { display: flex; align-items: flex-start; height: 109px; margin-top: 7px; padding-left: 52px; }
.card { position: relative; border-radius: 2px; flex: none; height: 103px; color: #fff; }
.card-1 { width: 177px; height: 104px; background: linear-gradient(125deg, #5a52f2 0%, #443cb8 55%, #2f2a85 100%); }
.card-2 { width: 173px; margin: 6px 0 0 46px; background: linear-gradient(115deg, #12d0e6 0%, #40d5e4 50%, #8fdce2 100%); }
.card-3 { width: 169px; margin: 4px 0 0 48px; background: linear-gradient(120deg, #ad15f5 0%, #b04de4 50%, #b98ad6 100%); }
.card-4 { width: 166px; margin: 6px 0 0 54px; background: linear-gradient(120deg, #ff86da 0%, #fb56c9 50%, #f41db7 100%); }
.card-head { display: flex; align-items: flex-start; }
.card-ico { width: 17px; height: 17px; border-radius: 50%; background: #d9d9d9; display: flex; align-items: center; justify-content: center; margin-top: 4px; flex: none; }
.card-title { font-size: 17.3px; font-weight: 300; line-height: 21px; white-space: nowrap; }
.card-dots { display: flex; flex-direction: column; gap: 2px; margin-top: 5px; position: absolute; }
.card-dots i { width: 2px; height: 2px; background: #fff; border-radius: 50%; }
.card-num { font-size: 18.5px; font-weight: 700; line-height: 16px; }
.card-total { font-size: 17.8px; font-weight: 200; line-height: 18px; white-space: nowrap; color: #eee; }
.card-1 .card-head { padding: 13px 0 0 15px; gap: 6px; }
.card-1 .card-ico { margin-top: 4px; }
.card-1 .card-dots { left: 171px; }
.card-1 .card-num { margin: 25px 0 0 21px; }
.card-1 .card-total { margin: 3px 0 0 21px; }
.card-2 .card-head { padding: 10px 0 0 11px; gap: 5px; }
.card-2 .card-dots { left: 163px; }
.card-2 .card-num { margin: 22px 0 0 25px; }
.card-2 .card-total { margin: 0 0 0 25px; }
.card-3 .card-head { padding: 17px 0 0 12px; gap: 4px; }
.card-3 .card-ico { margin-top: -1px; }
.card-3 .card-dots { left: 159px; margin-top: 5px; }
.card-3 .card-num { margin: 16px 0 0 21px; }
.card-3 .card-total { margin: 1px 0 0 19px; }
.card-4 .card-head { padding: 13px 0 0 4px; gap: 3px; }
.card-4 .card-ico { margin-top: 5px; }
.card-4 .card-dots { left: 157px; margin-top: 9px; }
.card-4 .card-num { margin: 3px 0 0 29px; line-height: 14px; }
.card-4 .card-total { margin: 0 0 0 29px; line-height: 16px; }
.donut { position: absolute; width: 25px; height: 25px; border-radius: 50%; display: flex; align-items: center; justify-content: center; font-size: 6px; }
.donut::after { content: ""; position: absolute; inset: 4.5px; border-radius: 50%; background: var(--hole); }
.donut span { position: relative; z-index: 1; }
.card-1 .donut { --hole: #2f2b86; left: 144px; top: 69px; background: conic-gradient(#ece9fa, #6f6cd8 80%, #ece9fa); color: #8a88cc; }
.card-2 .donut { --hole: #5cdbe8; left: 139px; top: 65px; background: conic-gradient(#3be4ec, #a6e6ea 50%, #1adff0); color: #a9edf2; }
.card-3 .donut { --hole: #ad70dc; left: 133px; top: 63px; background: #8c50c0; color: #cfa8ee; }
.card-4 .donut { --hole: #ef3fba; left: 129px; top: 61px; background: conic-gradient(#ff8cd9, #ffb0e0 30%, #8d1a66 70%, #ff8cd9); color: #ffb6e6; }

.panels { display: flex; align-items: flex-start; margin: 48px 0 0 67px; }
.panels-left { width: 480px; flex: none; }
.panels-row { display: flex; gap: 34px; margin-top: 14px; }
.panel { border-radius: 4px; background: #41396a; }
.panel-title { font-size: 17.3px; font-weight: 700; line-height: 20px; color: #fff; white-space: nowrap; }
.panel-chart { width: 473px; height: 180px; position: relative; }
.chart-title { padding: 4.5px 0 0 25px; }
.chart { position: absolute; left: 0; top: 0; }
.grid-lines path { stroke: #7c769b; stroke-width: 1.4; fill: none; }
.stray { stroke: #7c769b; stroke-width: 1; fill: none; }
.axis-y text { font-family: Inter, sans-serif; font-size: 18px; font-weight: 700; fill: #fff; text-anchor: end; }
.axis-x text { font-family: Inter, sans-serif; font-size: 12.8px; font-weight: 700; fill: #fff; }
.curves path { fill: none; stroke: #fff; stroke-width: 3.6; }
.panel-learn { width: 223px; height: 199px; }
.panel-learn .panel-title { padding: 0 0 0 11px; line-height: 18px; }
.panel-report { width: 223px; height: 199px; }
.panel-report .panel-title { padding: 0 0 0 14px; line-height: 18px; }
.panel-env { position: relative; width: 272px; height: 392px; margin: 1px 0 0 34px; padding-top: 11px; }
.panel-env .panel-title { padding-left: 8px; }
.env-dots { position: absolute; left: 246px; top: 25px; display: flex; flex-direction: column; gap: 2px; }
.env-dots i { width: 2px; height: 2px; background: #fff; border-radius: 50%; }
.env-box { width: 227px; height: 102px; margin-left: 18px; border: 1px solid #2b2547; border-radius: 4px; }
.env-box-1 { margin-top: 19px; }
.env-box-2 { margin-top: 18px; }

/* Floating toolbar */
.toolbar { position: absolute; left: 368px; top: 838px; width: 582px; height: 60px; border-radius: 20px; background: #fff; box-shadow: 0 1px 5px rgba(0,0,0,.22); display: flex; align-items: center; padding-left: 10px; }
.tool { width: 40px; height: 40px; display: flex; align-items: center; justify-content: center; flex: none; border-radius: 6px; }
.tool-on { background: #0d99ff; }
.chev-t { margin: 0 16.5px 0 6px; }
.tool-c { margin-left: 9px; }
.tool-a { margin-left: 11px; }
.tb-sep { width: 2px; height: 60px; margin-left: 10px; background: #e6e6e6; flex: none; }
.modes { width: 115px; height: 40px; margin-left: 10px; border-radius: 8px; background: #f4f4f4; display: flex; align-items: center; padding-left: 3px; }
.mode { width: 35px; height: 35px; display: flex; align-items: center; justify-content: center; border-radius: 5px; }
.mode-on { background: #fff; box-shadow: 0 0 2px rgba(0,0,0,.25); margin: 0 3px 0 1px; }
.help { position: absolute; left: 1549px; top: 843px; width: 40px; height: 40px; border-radius: 50%; background: #1e1e1e; color: #fff; font-size: 16px; display: flex; align-items: center; justify-content: center; }

/* Figma right panel */
.right-panel { width: 301px; flex: none; background: #fff; border-left: 1px solid #e6e6e6; font-size: 13.8px; }
.rp-top { height: 61px; display: flex; align-items: center; padding: 0 10px 0 15px; }
.rp-avatar { width: 30px; height: 30px; border-radius: 50%; background: #5230a8; color: #fff; font-size: 14px; display: flex; align-items: center; justify-content: center; }
.rp-play { margin-left: 108px; }
.rp-pchev { margin-left: 18px; }
.share { width: 68px; height: 40px; margin-left: auto; border-radius: 6px; background: #0d99ff; color: #fff; font-size: 14px; font-weight: 500; display: flex; align-items: center; justify-content: center; }
.rp-tabs { height: 41px; border-bottom: 1px solid #e6e6e6; display: flex; align-items: flex-start; padding: 0 18px 0 10px; }
.pill-design { width: 66px; padding-left: 10px; font-weight: 600; }
.rp-tabs .tab-muted { line-height: 30px; }
.zoom { margin-left: auto; line-height: 30px; color: #222; }
.zoom-chev { margin: 12px 0 0 17px; }
.rp-page { height: 106px; border-bottom: 1px solid #e6e6e6; padding: 16px 0 0 20px; }
.rp-page-title { font-weight: 600; line-height: 18px; }
.rp-color-row { display: flex; align-items: center; margin-top: 21px; }
.color-field { width: 230px; height: 30px; border-radius: 6px; background: #f4f4f4; display: flex; align-items: center; padding-left: 6px; color: #1e1e1e; position: relative; }
.swatch { width: 17px; height: 17px; border: 1px solid #dcdcdc; border-radius: 3px; background: #f5f5f5; }
.hex { margin-left: 8px; }
.opac { margin-left: auto; }
.pct { margin: 0 9px 0 14px; color: #8a8a8a; }
.color-field::after { content: ""; position: absolute; left: 162px; top: 0; bottom: 0; width: 1px; background: #fff; }
.eye { margin-left: 16px; }
.rp-row { height: 51px; border-bottom: 1px solid #e6e6e6; display: flex; align-items: center; justify-content: space-between; padding: 0 18px 0 20px; color: #7e7e7e; font-weight: 500; }

/* Taskbar */
.taskbar { height: 60px; flex: none; background: #fbe4f0; border-top: 1px solid #d9bccb; display: flex; align-items: center; font-family: "Open Sans", sans-serif; color: #222; }
.weather { width: 558px; flex: none; display: flex; align-items: center; padding-left: 27px; }
.wx-icon { position: relative; width: 30px; height: 34px; }
.wx-badge { position: absolute; left: 11px; top: -7px; width: 20px; height: 20px; border-radius: 50%; background: #c42b1c; color: #fff; font-size: 13px; font-weight: 400; display: flex; align-items: center; justify-content: center; }
.wx-text { margin-left: 7px; margin-top: -1px; font-size: 14.5px; line-height: 20px; }
.wx-desc { color: #555; }
.ts { width: 273px; height: 39px; margin-left: 17px; border-radius: 20px; background: #fff6fa; border: 1px solid #eed6e2; display: flex; align-items: center; padding-left: 12px; font-size: 16px; color: #555; }
.ts span { margin-left: 12px; }
.flora { margin-left: auto; margin-right: 6px; }
.tb-apps { display: flex; margin-left: 5px; }
.app-tile { width: 55px; height: 48px; display: flex; align-items: center; justify-content: center; position: relative; }
.app-tile-chrome::before { content: ""; position: absolute; left: 3px; right: 4px; top: 0; bottom: 0; background: #fdf3f8; border-radius: 5px; }
.app-tile-chrome svg { position: relative; }
.run-bar { position: absolute; left: 18px; top: 44px; width: 20px; height: 4px; border-radius: 2px; background: #0078d4; }
.myhp { width: 30px; height: 30px; background: #0f9ad6; color: #dff3fb; font-family: "Open Sans", sans-serif; font-size: 10.5px; display: flex; align-items: center; justify-content: center; }
.myhp i { font-weight: 700; font-size: 12px; }
.help-q { font-family: "Open Sans", sans-serif; font-size: 21px; font-weight: 800; fill: #fff; text-anchor: middle; }
.outlook-o { font-family: "Open Sans", sans-serif; font-size: 14px; font-weight: 700; fill: #fff; text-anchor: middle; }
.chrome-p { font-family: "Open Sans", sans-serif; font-size: 10px; font-weight: 600; fill: #d8cdf3; text-anchor: middle; }
.tray { margin-left: auto; display: flex; align-items: center; padding-right: 24px; font-size: 14.5px; }
.tr-cloud { margin-left: 22px; }
.tr-lang { margin-left: 21px; width: 32px; text-align: center; line-height: 20px; }
.tr-wifi { margin-left: 21px; }
.tr-vol { margin-left: 9px; }
.tr-bat { margin-left: 11px; }
.tr-clock { width: 90px; margin-left: 6px; text-align: right; line-height: 20px; white-space: nowrap; }
.tr-bell { margin-left: 12px; }
```
